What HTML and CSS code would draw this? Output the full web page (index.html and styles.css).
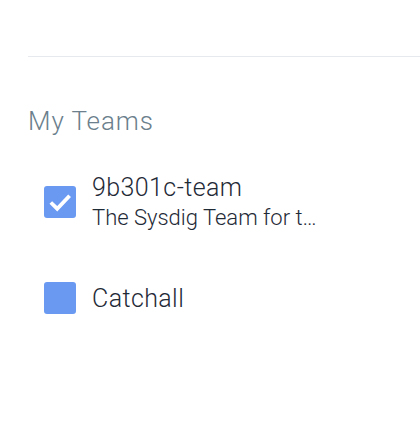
FILE: index.html
```html
<!DOCTYPE html>
<html>
<head>
<meta charset="utf-8">
<link rel="stylesheet" href="styles.css">
</head>
<body>
<div class="panel">
  <hr class="divider">
  <h2 class="heading">My Teams</h2>
  <ul class="teams">
    <li class="team">
      <span class="check checked">
        <svg viewBox="0 0 32 32" width="32" height="32"><path d="M6.8 16.5 L13.2 22.7 L25.6 9.8" fill="none" stroke="#fff" stroke-width="3.8"/></svg>
      </span>
      <div class="info">
        <div class="name">9b301c-team</div>
        <div class="desc">The Sysdig Team for t…</div>
      </div>
    </li>
    <li class="team">
      <span class="check"></span>
      <div class="info">
        <div class="name">Catchall</div>
      </div>
    </li>
  </ul>
</div>
</body>
</html>
```
FILE: styles.css
```css
html, body {
  margin: 0;
  padding: 0;
  background: #fff;
  font-family: Roboto, "Noto Sans", sans-serif;
}
.panel {
  padding-top: 56px;
  padding-left: 28px;
}
.divider {
  margin: 0;
  border: 0;
  height: 1px;
  background: #e6eaee;
}
.heading {
  margin: 48px 0 0;
  font-size: 26px;
  font-weight: 300;
  letter-spacing: 0.9px;
  line-height: 32px;
  color: #6b7f8d;
}
.teams {
  list-style: none;
  margin: 17px 0 0;
  padding: 0 0 0 16px;
}
.team {
  display: flex;
  align-items: center;
  gap: 16px;
  height: 96px;
}
.check {
  width: 32px;
  height: 32px;
  border-radius: 3px;
  background: #6a99f2;
  flex: none;
  display: block;
}
.check svg { display: block; }
.name {
  font-size: 25px;
  font-weight: 300;
  letter-spacing: 0.4px;
  line-height: 31px;
  color: #1f2a37;
}
.desc {
  font-size: 22px;
  font-weight: 300;
  line-height: 30px;
  color: #1f2a37;
}
```
